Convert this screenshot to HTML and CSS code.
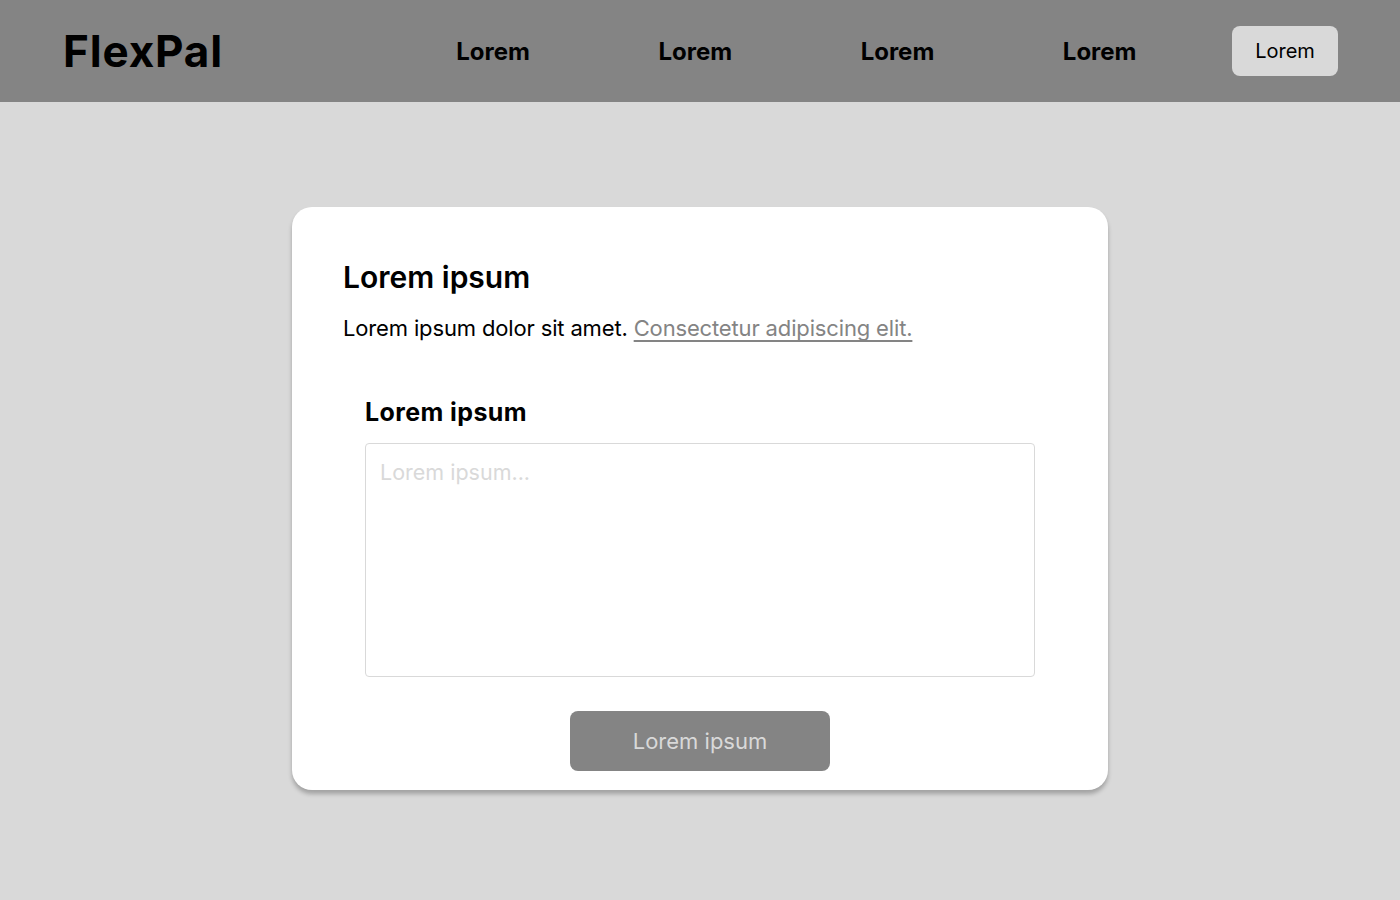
FILE: index.html
```html
<!DOCTYPE html>
<html lang="en">
<head>
<meta charset="utf-8">
<title>FlexPal</title>
<link rel="stylesheet" href="styles.css">
</head>
<body>
<header class="topbar">
  <div class="logo">FlexPal</div>
  <nav class="nav">
    <a class="nav-link" href="#">Lorem</a>
    <a class="nav-link" href="#">Lorem</a>
    <a class="nav-link" href="#">Lorem</a>
    <a class="nav-link" href="#">Lorem</a>
    <a class="nav-button" href="#">Lorem</a>
  </nav>
</header>
<main class="main">
  <section class="card">
    <h1 class="card-title">Lorem ipsum</h1>
    <p class="card-text">Lorem ipsum dolor sit amet. <a class="card-link" href="#">Consectetur adipiscing elit.</a></p>
    <form class="form">
      <label class="form-label" for="msg">Lorem ipsum</label>
      <textarea class="form-input" id="msg" placeholder="Lorem ipsum..."></textarea>
      <div class="form-actions">
        <button class="submit" type="button">Lorem ipsum</button>
      </div>
    </form>
  </section>
</main>
</body>
</html>
```
FILE: styles.css
```css
* { box-sizing: border-box; }
html, body { margin: 0; padding: 0; }
body {
  font-family: Inter, "Noto Sans", sans-serif;
  background: #d9d9d9;
  color: #000;
  min-height: 900px;
}
.topbar {
  height: 102px;
  background: #848484;
  display: flex;
  align-items: center;
  justify-content: space-between;
  padding: 0 62px 0 63px;
}
.logo {
  font-size: 44px;
  font-weight: 700;
  letter-spacing: 0.85px;
  line-height: 1;
}
.nav {
  display: flex;
  align-items: center;
  gap: 128.5px;
}
.nav-link {
  color: #000;
  text-decoration: none;
  font-size: 24px;
  font-weight: 700;
}
.nav-button {
  margin-left: -33px;
  width: 106px;
  height: 50px;
  border-radius: 8px;
  background: #d9d9d9;
  color: #000;
  text-decoration: none;
  font-size: 20px;
  display: flex;
  align-items: center;
  justify-content: center;
}
.main {
  display: flex;
  justify-content: center;
  padding-top: 105px;
}
.card {
  width: 816px;
  background: #fff;
  border-radius: 20px;
  box-shadow: 0 4px 4px rgba(0, 0, 0, 0.25);
  padding: 52px 51px 19px;
}
.card-title {
  margin: 0;
  font-size: 30px;
  font-weight: 600;
  line-height: 36px;
}
.card-text {
  margin: 20px 0 0;
  font-size: 22px;
  letter-spacing: -0.15px;
  line-height: 26px;
}
.card-link {
  color: #848484;
  text-decoration: underline;
  text-decoration-thickness: 1.5px;
  text-decoration-skip-ink: none;
  text-underline-offset: 4px;
}
.form {
  padding: 0 22px;
  margin-top: 56px;
  display: flex;
  flex-direction: column;
}
.form-label {
  font-size: 25px;
  font-weight: 700;
  letter-spacing: 0.4px;
  line-height: 30px;
}
.form-input {
  margin-top: 16px;
  height: 234px;
  border: 1px solid #d9d9d9;
  border-radius: 4px;
  padding: 15px 14px;
  font-family: inherit;
  font-size: 21.5px;
  resize: none;
  outline: none;
}
.form-input::placeholder { color: #d9d9d9; }
.form-actions {
  display: flex;
  justify-content: center;
  margin-top: 34px;
}
.submit {
  width: 260px;
  height: 60px;
  border: none;
  border-radius: 8px;
  background: #848484;
  color: #d9d9d9;
  font-family: inherit;
  font-size: 22px;
}
```
